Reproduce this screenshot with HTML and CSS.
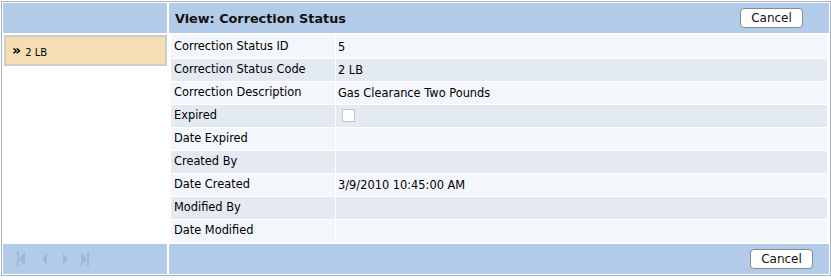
FILE: index.html
```html
<!DOCTYPE html>
<html lang="en">

<head>
    <meta charset="UTF-8">
    <title>View: Correction Status</title>
    <link rel="stylesheet" href="styles.css">
</head>

<body>
    <div class="panel">
        <div class="grid">
            <div class="head head-left"></div>
            <div class="head head-right">
                <span class="title">View: Correction Status</span>
                <button class="btn">Cancel</button>
            </div>

            <div class="list">
                <div class="list-item"><span class="chev">&raquo;</span> 2 LB</div>
            </div>
            <div class="detail">
                <div class="row"><div class="lbl">Correction Status ID</div><div class="val">5</div></div>
                <div class="row alt"><div class="lbl">Correction Status Code</div><div class="val">2 LB</div></div>
                <div class="row"><div class="lbl">Correction Description</div><div class="val">Gas Clearance Two Pounds</div></div>
                <div class="row alt"><div class="lbl">Expired</div><div class="val"><span class="check"></span></div></div>
                <div class="row"><div class="lbl">Date Expired</div><div class="val"></div></div>
                <div class="row alt"><div class="lbl">Created By</div><div class="val"></div></div>
                <div class="row"><div class="lbl">Date Created</div><div class="val">3/9/2010 10:45:00 AM</div></div>
                <div class="row alt"><div class="lbl">Modified By</div><div class="val"></div></div>
                <div class="row"><div class="lbl">Date Modified</div><div class="val"></div></div>
            </div>

            <div class="foot foot-left">
                <svg class="pager" width="90" height="18" viewBox="0 0 90 18">
                    <!-- first -->
                    <rect x="14" y="2" width="2" height="14"/>
                    <polygon points="22,2 22,16 16,9"/>
                    <!-- prev -->
                    <polygon points="44,3 44,15 39,9"/>
                    <!-- next -->
                    <polygon points="60,3 60,15 65,9"/>
                    <!-- last -->
                    <polygon points="78,2 78,16 84,9"/>
                    <rect x="84" y="2" width="2" height="14"/>
                </svg>
            </div>
            <div class="foot foot-right">
                <button class="btn">Cancel</button>
            </div>
        </div>
    </div>
</body>

</html>
```

FILE: styles.css
```css
body {
    margin: 0;
    padding: 1px;
    font-family: "DejaVu Sans", Verdana, sans-serif;
    font-size: 11.4px;
    color: #000;
}

.panel {
    width: 826px;
    border: 1px solid #a9b4c4;
    padding: 1px;
    background: #fff;
}

.grid {
    display: grid;
    grid-template-columns: 164px 1fr;
    grid-template-rows: 30px auto 30px;
    gap: 2px;
}

.head,
.foot {
    background: #b1cbe8;
}

.head-right {
    display: flex;
    align-items: center;
    justify-content: space-between;
    padding: 0 26px 0 6px;
}

.title {
    font-weight: bold;
    font-size: 12.8px;
    color: #111;
}

.btn {
    font-family: "DejaVu Sans", Verdana, sans-serif;
    font-size: 12px;
    height: 20px;
    width: 63px;
    padding: 0;
    background: #fff;
    border: 1px solid #8a8a8a;
    border-radius: 4px;
    color: #111;
}

.foot-right {
    display: flex;
    align-items: center;
    justify-content: flex-end;
    padding-right: 16px;
}

.foot-left {
    display: flex;
    align-items: center;
}

.pager {
    fill: #9bb8de;
}

.list-item {
    margin-left: 1px;
    height: 27px;
    line-height: 27px;
    background: #f5deb3;
    border: 2px solid #cdcdcd;
    padding-left: 6px;
    font-size: 10px;
}

.chev {
    font-size: 14px;
    font-weight: bold;
    vertical-align: 1px;
    margin-right: 1px;
}

.detail {
    padding: 0 2px;
}

.row {
    display: flex;
    height: 23px;
    background: #f3f6fa;
}

.row.alt {
    background: #e4eaf2;
}

.row + .row {
    box-shadow: inset 0 1px 0 #fff;
}

.lbl {
    width: 161px;
    padding-left: 3px;
    line-height: 22px;
    border-right: 1px solid #fff;
    white-space: nowrap;
}

.val {
    padding-left: 2px;
    line-height: 22px;
    display: flex;
    align-items: center;
}

.check {
    display: inline-block;
    width: 11px;
    height: 11px;
    background: #fff;
    border: 1px solid #c4c4c4;
    margin-left: 4px;
}
```
